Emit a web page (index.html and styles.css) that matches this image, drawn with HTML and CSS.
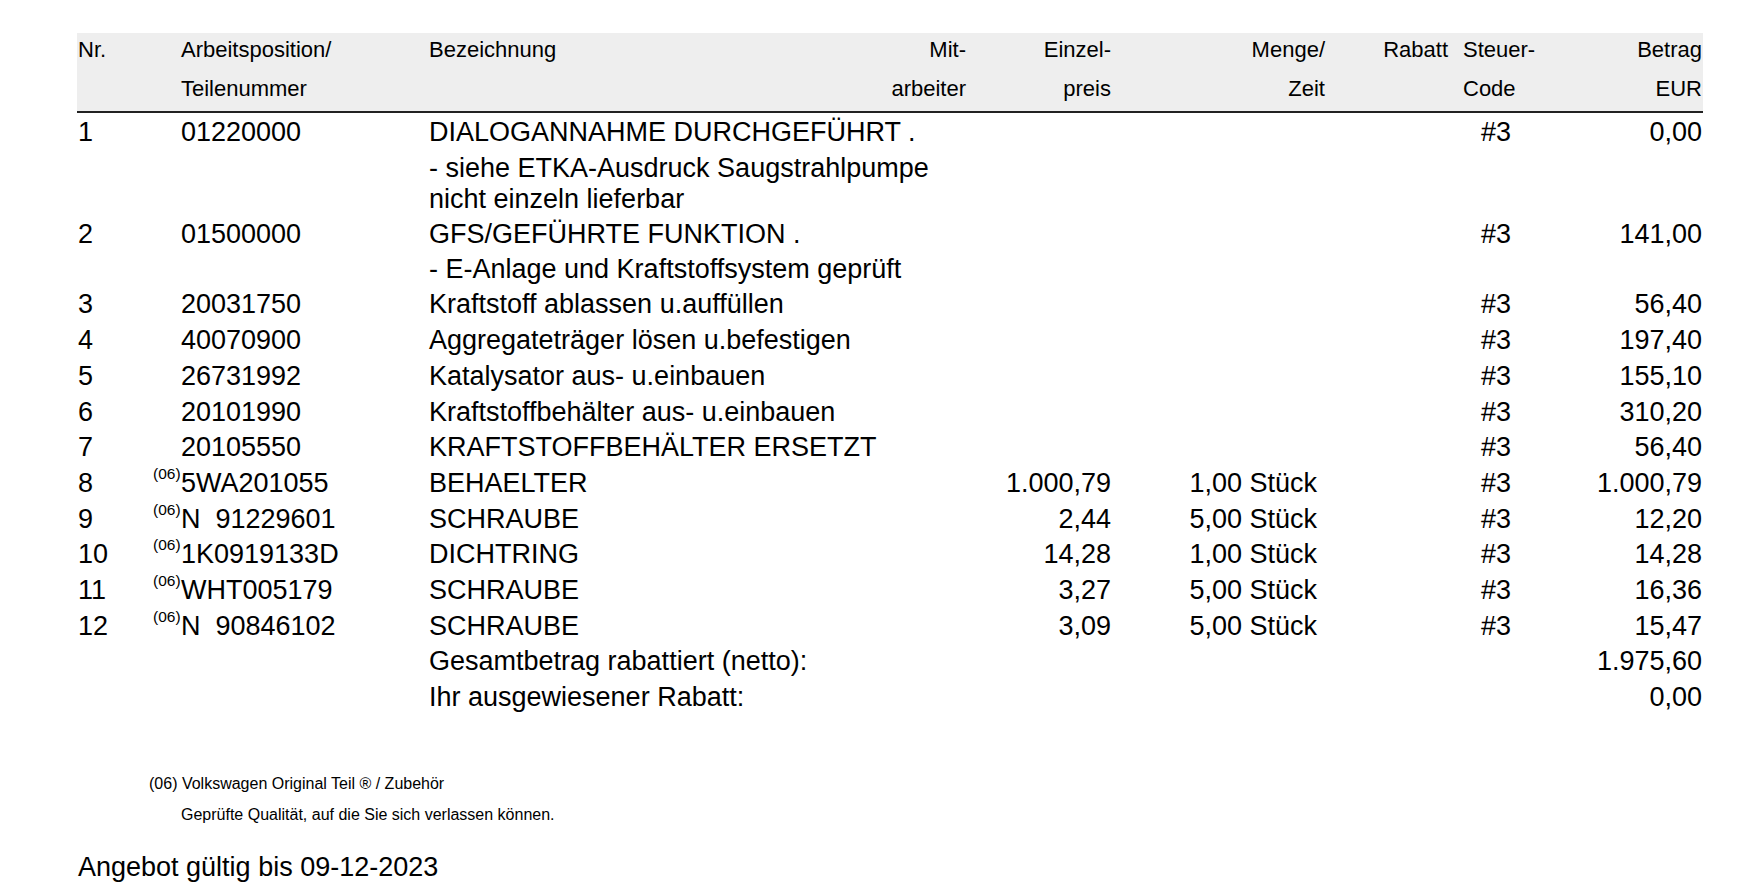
FILE: index.html
```html
<!DOCTYPE html>
<html lang="de">
<head>
<meta charset="utf-8">
<title>Angebot</title>
<link rel="stylesheet" href="styles.css">
</head>
<body>
<div class="page">
  <div class="table">
    <div class="thead cols">
      <div class="th"><span class="l1">Nr.</span><span class="l2">&nbsp;</span></div>
      <div class="th"><span class="l1">Arbeitsposition/</span><span class="l2">Teilenummer</span></div>
      <div class="th"><span class="l1">Bezeichnung</span><span class="l2">&nbsp;</span></div>
      <div class="th r"><span class="l1">Mit-</span><span class="l2">arbeiter</span></div>
      <div class="th r"><span class="l1">Einzel-</span><span class="l2">preis</span></div>
      <div class="th r"><span class="l1">Menge/</span><span class="l2">Zeit</span></div>
      <div class="th r"><span class="l1">Rabatt</span><span class="l2">&nbsp;</span></div>
      <div class="th tax"><span class="l1">Steuer-</span><span class="l2">Code</span></div>
      <div class="th r"><span class="l1">Betrag</span><span class="l2">EUR</span></div>
    </div>

    <div class="tbody">
      <div class="row cols">
        <div>1</div><div class="part">01220000</div>
        <div class="desc">DIALOGANNAHME DURCHGEFÜHRT .
          <div class="sub"><div>- siehe ETKA-Ausdruck Saugstrahlpumpe</div><div>nicht einzeln lieferbar</div></div>
        </div>
        <div class="r"></div><div class="qty"></div><div class="r"></div><div class="code">#3</div><div class="r">0,00</div>
      </div>
      <div class="row cols">
        <div>2</div><div class="part">01500000</div>
        <div class="desc">GFS/GEFÜHRTE FUNKTION .
          <div class="sub"><div>- E-Anlage und Kraftstoffsystem geprüft</div></div>
        </div>
        <div class="r"></div><div class="qty"></div><div class="r"></div><div class="code">#3</div><div class="r">141,00</div>
      </div>
      <div class="row cols">
        <div>3</div><div class="part">20031750</div><div class="desc">Kraftstoff ablassen u.auffüllen</div>
        <div class="r"></div><div class="qty"></div><div class="r"></div><div class="code">#3</div><div class="r">56,40</div>
      </div>
      <div class="row cols">
        <div>4</div><div class="part">40070900</div><div class="desc">Aggregateträger lösen u.befestigen</div>
        <div class="r"></div><div class="qty"></div><div class="r"></div><div class="code">#3</div><div class="r">197,40</div>
      </div>
      <div class="row cols">
        <div>5</div><div class="part">26731992</div><div class="desc">Katalysator aus- u.einbauen</div>
        <div class="r"></div><div class="qty"></div><div class="r"></div><div class="code">#3</div><div class="r">155,10</div>
      </div>
      <div class="row cols">
        <div>6</div><div class="part">20101990</div><div class="desc">Kraftstoffbehälter aus- u.einbauen</div>
        <div class="r"></div><div class="qty"></div><div class="r"></div><div class="code">#3</div><div class="r">310,20</div>
      </div>
      <div class="row cols">
        <div>7</div><div class="part">20105550</div><div class="desc">KRAFTSTOFFBEHÄLTER ERSETZT</div>
        <div class="r"></div><div class="qty"></div><div class="r"></div><div class="code">#3</div><div class="r">56,40</div>
      </div>
      <div class="row cols">
        <div>8</div><div class="part"><span class="ref">(06)</span>5WA201055</div><div class="desc">BEHAELTER</div>
        <div class="r">1.000,79</div><div class="qty">1,00 Stück</div><div class="r"></div><div class="code">#3</div><div class="r">1.000,79</div>
      </div>
      <div class="row cols">
        <div>9</div><div class="part"><span class="ref">(06)</span>N  91229601</div><div class="desc">SCHRAUBE</div>
        <div class="r">2,44</div><div class="qty">5,00 Stück</div><div class="r"></div><div class="code">#3</div><div class="r">12,20</div>
      </div>
      <div class="row cols">
        <div>10</div><div class="part"><span class="ref">(06)</span>1K0919133D</div><div class="desc">DICHTRING</div>
        <div class="r">14,28</div><div class="qty">1,00 Stück</div><div class="r"></div><div class="code">#3</div><div class="r">14,28</div>
      </div>
      <div class="row cols">
        <div>11</div><div class="part"><span class="ref">(06)</span>WHT005179</div><div class="desc">SCHRAUBE</div>
        <div class="r">3,27</div><div class="qty">5,00 Stück</div><div class="r"></div><div class="code">#3</div><div class="r">16,36</div>
      </div>
      <div class="row cols">
        <div>12</div><div class="part"><span class="ref">(06)</span>N  90846102</div><div class="desc">SCHRAUBE</div>
        <div class="r">3,09</div><div class="qty">5,00 Stück</div><div class="r"></div><div class="code">#3</div><div class="r">15,47</div>
      </div>
      <div class="row cols">
        <div></div><div></div><div class="desc">Gesamtbetrag rabattiert (netto):</div>
        <div class="r"></div><div class="qty"></div><div class="r"></div><div class="code"></div><div class="r">1.975,60</div>
      </div>
      <div class="row cols">
        <div></div><div></div><div class="desc">Ihr ausgewiesener Rabatt:</div>
        <div class="r"></div><div class="qty"></div><div class="r"></div><div class="code"></div><div class="r">0,00</div>
      </div>
    </div>
  </div>

  <div class="notes">
    <div class="note1">(06) Volkswagen Original Teil ® / Zubehör</div>
    <div class="note2">Geprüfte Qualität, auf die Sie sich verlassen können.</div>
  </div>

  <div class="valid">Angebot gültig bis 09-12-2023</div>
</div>
</body>
</html>
```

FILE: styles.css
```css
html, body {
  margin: 0;
  padding: 0;
  background: #ffffff;
}

body {
  font-family: "Liberation Sans", Arial, Helvetica, sans-serif;
  color: #000000;
}

.page {
  padding: 33px 0 0 77px;
}

.table {
  width: 1626px;
}

.cols {
  display: grid;
  grid-template-columns: 103px 248px 437px 100px 145px 214px 123px 102px 152px;
  padding: 0 1px;
}

.thead {
  background: #eeeeee;
  border-bottom: 2px solid #222222;
  font-size: 22px;
}

.th .l1 {
  display: block;
  line-height: 34px;
  white-space: nowrap;
}

.th .l2 {
  display: block;
  line-height: 44px;
  white-space: nowrap;
}

.r {
  text-align: right;
}

.th.tax {
  padding-left: 15px;
}

.tbody {
  padding-top: 2px;
}

.row {
  font-size: 27px;
  line-height: 35.7px;
}

.row > div {
  white-space: nowrap;
}

.part {
  white-space: pre !important;
}

.desc {
  grid-column: 3 / 5;
}

.sub {
  line-height: 31px;
  padding: 2px 0;
}

.qty {
  text-align: right;
  padding-right: 8px;
}

.code {
  padding-left: 33px;
}

.ref {
  font-size: 15.5px;
  line-height: 0;
  vertical-align: 13px;
  margin-left: -28px;
  display: inline-block;
  width: 28px;
}

.notes {
  margin-top: 52px;
  font-size: 16px;
  line-height: 31px;
}

.note1 {
  padding-left: 72px;
}

.note2 {
  padding-left: 104px;
}

.valid {
  margin-top: 20px;
  padding-left: 1px;
  font-size: 27px;
  line-height: 35.7px;
}
```
